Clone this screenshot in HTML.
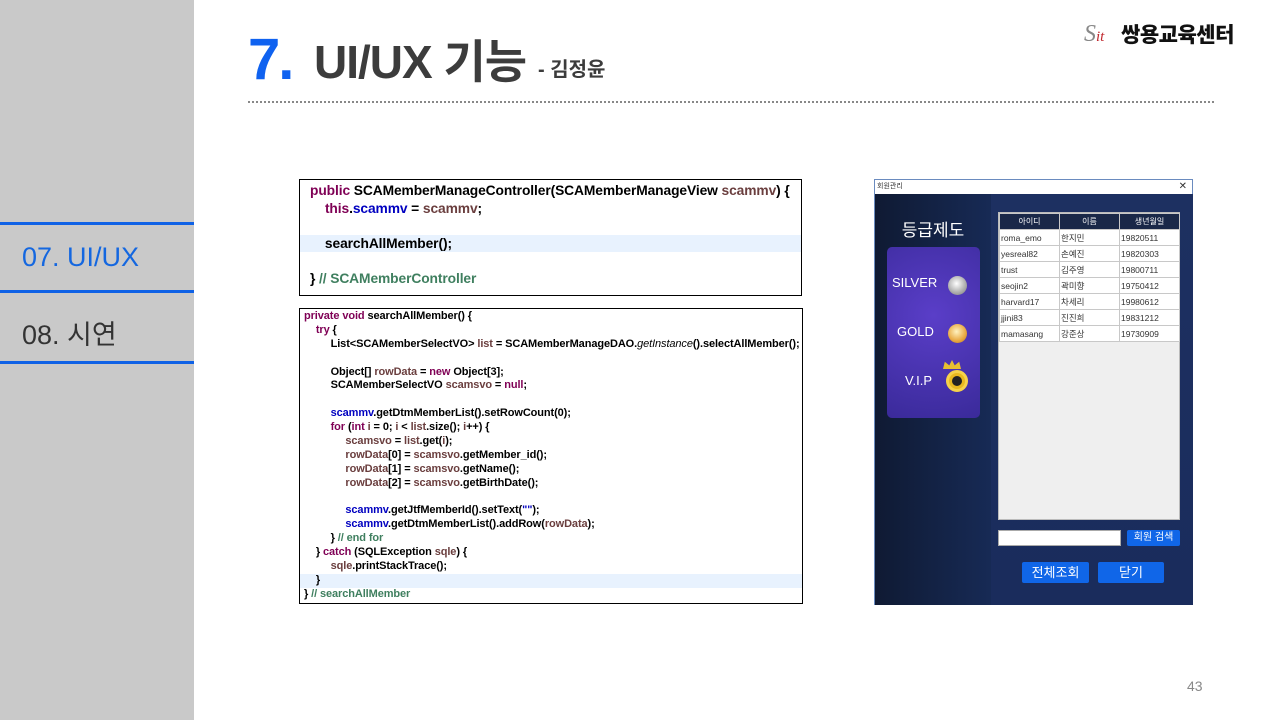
<!DOCTYPE html>
<html><head><meta charset="utf-8"><style>
*{margin:0;padding:0;box-sizing:border-box}
html,body{width:1280px;height:720px;overflow:hidden}
body{background:#fff;position:relative;font-family:"Liberation Sans","Noto Sans CJK KR",sans-serif}
.abs{position:absolute}
.side{left:0;top:0;width:194px;height:720px;background:#c9c9c9}
.bl{left:0;width:194px;height:3px;background:#0f62e6}
.code{font-family:"Liberation Sans","Noto Sans CJK KR",sans-serif;color:#000;letter-spacing:-0.1px}
.code div{white-space:pre;height:13.9px;line-height:13.9px;font-size:11px;font-weight:bold}
.k{color:#7f0055;font-weight:bold}
.f{color:#0000c0}
.v{color:#6a3e3e}
.c{color:#3f7f5f}
.code.c1 div{height:17.6px;line-height:17.6px;font-size:13.8px;font-weight:bold;letter-spacing:-0.1px}
table{border-collapse:collapse;font-size:8.5px;color:#333;table-layout:fixed}
td{border:1px solid #c8c8c8;height:16px;padding-left:1px;background:#fff}
th{background:#1a2848;color:#fff;border:1px solid #c8c8c8;height:16px;font-weight:normal;font-size:8px}
.btn{background:#1066e8;color:#fff;text-align:center;border-radius:2px}
</style></head><body>
<div class="abs side"></div>
<div class="abs bl" style="top:222px"></div>
<div class="abs bl" style="top:290px"></div>
<div class="abs bl" style="top:361px"></div>
<div class="abs" style="left:22px;top:242px;font-size:27px;color:#1467e0">07. UI/UX</div>
<div class="abs" style="left:22px;top:313px;font-size:27px;color:#333">08. 시연</div>

<div class="abs" style="left:248px;top:28px;font-size:58px;font-weight:bold;color:#0f62f0;line-height:64px;letter-spacing:-2px">7.</div>
<div class="abs" style="left:314px;top:34px;font-size:46px;font-weight:bold;color:#3c3c3c;line-height:56px;letter-spacing:-1px">UI/UX 기능</div>
<div class="abs" style="left:538px;top:56px;font-size:20px;font-weight:bold;color:#3c3c3c;line-height:28px">- 김정윤</div>
<div class="abs" style="left:248px;top:101px;width:966px;border-top:2px dotted #888"></div>

<div class="abs" style="left:1084px;top:21px;font-size:24px;font-style:italic;font-family:'Liberation Serif',serif;color:#888;line-height:26px">S<span style="color:#c0272d;font-size:15px">it</span></div>
<div class="abs" style="left:1121px;top:22px;font-size:21px;font-weight:900;color:#111;line-height:28px;letter-spacing:-0.5px">쌍용교육센터</div>

<div class="abs code c1" style="left:299px;top:179px;width:503px;height:117px;border:1px solid #000;padding:2px 0 0 10px"><div><span class="k">public</span> SCAMemberManageController(SCAMemberManageView <span class="v">scammv</span>) {</div><div>    <span class="k">this</span>.<span class="f">scammv</span> = <span class="v">scammv</span>;</div><div> </div><div style="background:#e8f2fe;margin-left:-10px;padding-left:10px">    searchAllMember();</div><div> </div><div>} <span class="c">// SCAMemberController</span></div></div>

<div class="abs code" style="left:299px;top:308px;width:504px;height:296px;border:1px solid #000;padding:1px 0 0 4px"><div><span class="k">private void</span> searchAllMember() {</div><div>    <span class="k">try</span> {</div><div>         List&lt;SCAMemberSelectVO&gt; <span class="v">list</span> = SCAMemberManageDAO.<i style="font-weight:normal">getInstance</i>().selectAllMember();</div><div> </div><div>         Object[] <span class="v">rowData</span> = <span class="k">new</span> Object[3];</div><div>         SCAMemberSelectVO <span class="v">scamsvo</span> = <span class="k">null</span>;</div><div> </div><div>         <span class="f">scammv</span>.getDtmMemberList().setRowCount(0);</div><div>         <span class="k">for</span> (<span class="k">int</span> <span class="v">i</span> = 0; <span class="v">i</span> &lt; <span class="v">list</span>.size(); <span class="v">i</span>++) {</div><div>              <span class="v">scamsvo</span> = <span class="v">list</span>.get(<span class="v">i</span>);</div><div>              <span class="v">rowData</span>[0] = <span class="v">scamsvo</span>.getMember_id();</div><div>              <span class="v">rowData</span>[1] = <span class="v">scamsvo</span>.getName();</div><div>              <span class="v">rowData</span>[2] = <span class="v">scamsvo</span>.getBirthDate();</div><div> </div><div>              <span class="f">scammv</span>.getJtfMemberId().setText(<span class="f">""</span>);</div><div>              <span class="f">scammv</span>.getDtmMemberList().addRow(<span class="v">rowData</span>);</div><div>         } <span class="c">// end for</span></div><div>    } <span class="k">catch</span> (SQLException <span class="v">sqle</span>) {</div><div>         <span class="v">sqle</span>.printStackTrace();</div><div style="background:#e8f2fe;margin-left:-4px;padding-left:4px">    }</div><div>} <span class="c">// searchAllMember</span></div></div>

<div class="abs" style="left:874px;top:179px;width:319px;height:426px;border:1px solid #6a8bbf;background:#18284f">
  <div style="height:14px;background:#fff;font-size:7px;line-height:14px;padding-left:2px;color:#333;position:relative">회원관리<span style="position:absolute;right:5px;top:0;font-size:10px">✕</span></div>
  <div class="abs" style="left:0;top:14px;width:116px;height:411px;background:linear-gradient(90deg,#0f1a33,#172a55)"></div>
  <div class="abs" style="left:116px;top:14px;width:202px;height:411px;background:linear-gradient(180deg,#1d3061,#1a2c5c)"></div>
  <div class="abs" style="left:0;top:36px;width:116px;text-align:center;color:#fff;font-size:17px">등급제도</div>
  <div class="abs" style="left:12px;top:67px;width:93px;height:171px;border-radius:5px;background:radial-gradient(circle at 50% 40%,#5a3ec8,#3a2a9a)"></div>
  <div class="abs" style="left:17px;top:95px;color:#fff;font-size:13px">SILVER</div>
  <div class="abs" style="left:73px;top:96px;width:19px;height:19px;border-radius:50%;background:radial-gradient(circle at 45% 40%,#fff,#aaa 60%,#777)"></div>
  <div class="abs" style="left:22px;top:144px;color:#fff;font-size:13px">GOLD</div>
  <div class="abs" style="left:73px;top:144px;width:19px;height:19px;border-radius:50%;background:radial-gradient(circle at 45% 40%,#fff2c0,#e8a840 60%,#b57420)"></div>
  <div class="abs" style="left:30px;top:193px;color:#fff;font-size:13px">V.I.P</div>
  <div class="abs" style="left:71px;top:190px;width:22px;height:22px;border-radius:50%;background:#e8b820;border:3px solid #f6d24a"><div style="margin:3px;width:10px;height:10px;background:#222;border-radius:50%"></div></div>
  <div class="abs" style="left:68px;top:180px;width:18px;height:9px;background:#e8c030;clip-path:polygon(0 100%,10% 20%,35% 60%,50% 0,65% 60%,90% 20%,100% 100%)"></div>
  <div class="abs" style="left:123px;top:32px;width:182px;height:308px;background:#efefef;border:1px solid #bbb">
    <table style="width:180px"><colgroup><col style="width:60px"><col style="width:60px"><col style="width:60px"></colgroup><tr><th>아이디</th><th>이름</th><th>생년월일</th></tr>
    <tr><td>roma_emo</td><td>한지민</td><td>19820511</td></tr>
    <tr><td>yesreal82</td><td>손예진</td><td>19820303</td></tr>
    <tr><td>trust</td><td>김주영</td><td>19800711</td></tr>
    <tr><td>seojin2</td><td>곽미향</td><td>19750412</td></tr>
    <tr><td>harvard17</td><td>차세리</td><td>19980612</td></tr>
    <tr><td>jjini83</td><td>진진희</td><td>19831212</td></tr>
    <tr><td>mamasang</td><td>강준상</td><td>19730909</td></tr></table>
  </div>
  <div class="abs" style="left:123px;top:350px;width:123px;height:16px;background:#fff;border:1px solid #aaa"></div>
  <div class="abs btn" style="left:252px;top:350px;width:53px;height:16px;font-size:10px;line-height:16px">회원 검색</div>
  <div class="abs btn" style="left:147px;top:382px;width:67px;height:21px;font-size:13px;line-height:21px">전체조회</div>
  <div class="abs btn" style="left:223px;top:382px;width:66px;height:21px;font-size:13px;line-height:21px">닫기</div>
</div>

<div class="abs" style="left:1187px;top:678px;font-size:14px;color:#888">43</div>
</body></html>
